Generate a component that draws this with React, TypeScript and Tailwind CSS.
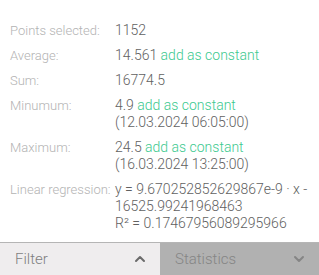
import { ChevronUp, ChevronDown } from 'lucide-react'

const rows: { label: string; lines: React.ReactNode[] }[] = [
  { label: 'Points selected:', lines: ['1152'] },
  { label: 'Average:', lines: [<>14.561 <Add /></>] },
  { label: 'Sum:', lines: ['16774.5'] },
  { label: 'Minumum:', lines: [<>4.9 <Add /></>, '(12.03.2024 06:05:00)'] },
  { label: 'Maximum:', lines: [<>24.5 <Add /></>, '(16.03.2024 13:25:00)'] },
  {
    label: 'Linear regression:',
    lines: ['y = 9.670252852629867e-9 · x -', '16525.99241968463', 'R² = 0.17467956089295966'],
  },
]

function Add() {
  return <span className="text-[#3cc98f] cursor-pointer">add as constant</span>
}

export default function App() {
  return (
    <div
      className="w-[319px] h-[275px] flex flex-col bg-white overflow-hidden"
      style={{ fontFamily: 'Roboto, sans-serif' }}
    >
      <div className="flex-1 pt-[22px] px-[10px] flex flex-col gap-[8px] leading-[17px] font-light">
        {rows.map((r) => (
          <div key={r.label} className="flex">
            <div className="w-[105px] shrink-0 text-[13px] text-[#b3b3b3] whitespace-nowrap">{r.label}</div>
            <div className="text-[14px] text-[#616161]">
              {r.lines.map((l, i) => (
                <div key={i}>{l}</div>
              ))}
            </div>
          </div>
        ))}
      </div>
      <div className="h-[33px] flex border-t border-[#b5b5b5] text-[15px] font-light">
        <div className="w-[160px] flex items-center justify-between pl-[15px] pr-[12px] bg-[#efedee] text-[#7e7e7e]">
          <span>Filter</span>
          <ChevronUp size={16} strokeWidth={3} className="text-[#6b6b6b]" />
        </div>
        <div className="flex-1 flex items-center justify-between pl-[15px] pr-[12px] bg-[#b1b1b1] text-[#858585]">
          <span>Statistics</span>
          <ChevronDown size={16} strokeWidth={3} className="text-[#858585]" />
        </div>
      </div>
    </div>
  )
}
